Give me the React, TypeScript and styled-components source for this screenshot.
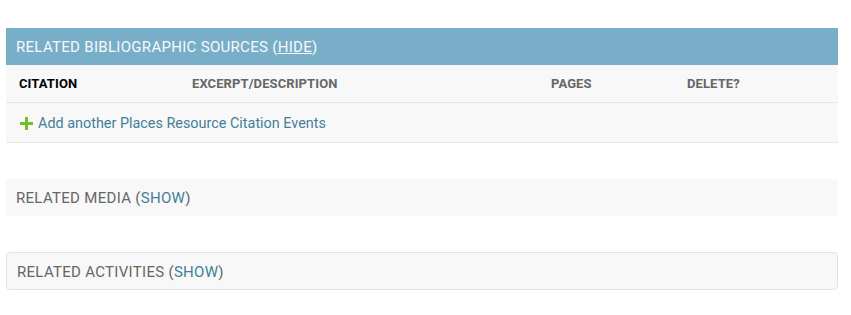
import styled, { createGlobalStyle } from 'styled-components';

const GlobalStyle = createGlobalStyle`
  html, body {
    margin: 0;
    padding: 0;
    background: #ffffff;
    font-family: Roboto, "Liberation Sans", sans-serif;
  }
`;

const Page = styled.div`
  display: flex;
  flex-direction: column;
  gap: 36px;
  padding: 28px 13px 0 6px;
`;

const Group = styled.div`
  display: flex;
  flex-direction: column;
`;

const Caption = styled.h2<{ $open?: boolean; $bordered?: boolean }>`
  margin: 0;
  height: ${(p) => (p.$bordered ? '36px' : '37px')};
  display: flex;
  align-items: center;
  padding: ${(p) => (p.$bordered ? '2px 10px 0' : '0 10px')};
  box-sizing: ${(p) => (p.$bordered ? 'border-box' : 'content-box')};
  ${(p) => p.$bordered && 'height: 38px;'}
  font-size: 15px;
  font-weight: 400;
  letter-spacing: 0.3px;
  text-transform: uppercase;
  color: ${(p) => (p.$open ? '#f4f9fb' : '#666666')};
  background: ${(p) => (p.$open ? '#79aec8' : '#f8f8f8')};
  border-radius: ${(p) => (p.$open ? '0' : '4px')};
  border: ${(p) => (p.$bordered ? '1px solid #e3e3e3' : 'none')};
`;

const Toggle = styled.a<{ $open?: boolean }>`
  color: ${(p) => (p.$open ? '#f4f9fb' : '#447e9b')};
  text-decoration: ${(p) => (p.$open ? 'underline' : 'none')};
  cursor: pointer;
`;

const HeadRow = styled.div`
  display: grid;
  grid-template-columns: 173px 359px 136px 1fr;
  align-items: center;
  height: 37px;
  padding: 0 13px;
  background: #f8f8f8;
  border-bottom: 1px solid #e6e6e6;
`;

const Cell = styled.div<{ $strong?: boolean }>`
  font-size: 13px;
  font-weight: 700;
  letter-spacing: 0.1px;
  text-transform: uppercase;
  color: ${(p) => (p.$strong ? '#000000' : '#666666')};
`;

const AddRow = styled.div`
  height: 39px;
  box-sizing: border-box;
  padding: 2px 14px 0;
  display: flex;
  align-items: center;
  background: #f8f8f8;
  border-bottom: 1px solid #e6e6e6;
  height: 40px;
`;

const AddLink = styled.a`
  display: flex;
  align-items: center;
  gap: 5px;
  font-size: 14.4px;
  color: #447e9b;
  text-decoration: none;
`;

const PlusIcon = () => (
  <svg width="13" height="13" viewBox="0 0 13 13">
    <path d="M5 0h3v5h5v3H8v5H5V8H0V5h5z" fill="#70bf2b" />
  </svg>
);

const columns = ['Citation', 'Excerpt/Description', 'Pages', 'Delete?'];

export default function App() {
  return (
    <>
      <GlobalStyle />
      <Page>
        <Group>
          <Caption $open>
            Related Bibliographic Sources (<Toggle $open>Hide</Toggle>)
          </Caption>
          <HeadRow>
            {columns.map((c, i) => (
              <Cell key={c} $strong={i === 0}>
                {c}
              </Cell>
            ))}
          </HeadRow>
          <AddRow>
            <AddLink>
              <PlusIcon />
              Add another Places Resource Citation Events
            </AddLink>
          </AddRow>
        </Group>
        <Caption>
          Related Media (<Toggle>Show</Toggle>)
        </Caption>
        <Caption $bordered>
          Related Activities (<Toggle>Show</Toggle>)
        </Caption>
      </Page>
    </>
  );
}
